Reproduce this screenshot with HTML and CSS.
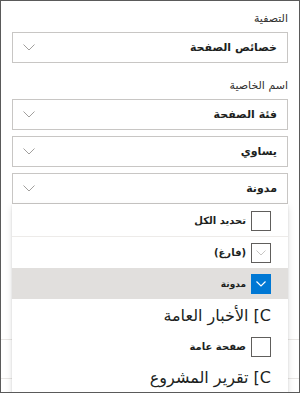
FILE: index.html
```html
<!DOCTYPE html>
<html lang="ar" dir="rtl">
<head>
<meta charset="utf-8">
<link rel="stylesheet" href="styles.css">
</head>
<body>
<div class="frame">
  <div class="content">
    <div class="field first">
      <div class="label">التصفية</div>
      <div class="select"><span class="val">خصائص الصفحة</span><svg class="chev" width="12" height="7" viewBox="0 0 12 7"><polyline points="0.5,0.5 6,6 11.5,0.5" fill="none" stroke="#a19f9d" stroke-width="1"/></svg></div>
    </div>
    <div class="field">
      <div class="label">اسم الخاصية</div>
      <div class="stack">
        <div class="select"><span class="val">فئة الصفحة</span><svg class="chev" width="12" height="7" viewBox="0 0 12 7"><polyline points="0.5,0.5 6,6 11.5,0.5" fill="none" stroke="#a19f9d" stroke-width="1"/></svg></div>
        <div class="select"><span class="val">يساوي</span><svg class="chev" width="12" height="7" viewBox="0 0 12 7"><polyline points="0.5,0.5 6,6 11.5,0.5" fill="none" stroke="#a19f9d" stroke-width="1"/></svg></div>
        <div class="dropdown">
          <div class="select"><span class="val">مدونة</span><svg class="chev" width="12" height="7" viewBox="0 0 12 7"><polyline points="0.5,0.5 6,6 11.5,0.5" fill="none" stroke="#a19f9d" stroke-width="1"/></svg></div>
          <div class="panel">
            <div class="opt sep">
              <span class="box"></span><span class="otext">تحديد الكل</span>
            </div>
            <div class="opt">
              <span class="box dim"><svg width="10" height="6" viewBox="0 0 10 6"><polyline points="0.5,0.5 5,5 9.5,0.5" fill="none" stroke="#c8c6c4" stroke-width="1"/></svg></span><span class="otext">(فارغ)</span>
            </div>
            <div class="opt sel">
              <span class="box on"><svg width="10" height="6" viewBox="0 0 10 6"><polyline points="0.5,0.5 5,5 9.5,0.5" fill="none" stroke="#ffffff" stroke-width="1.2"/></svg></span><span class="otext small">مدونة</span>
            </div>
            <div class="opt big">C] الأخبار العامة</div>
            <div class="opt mid">
              <span class="box"></span><span class="otext">صفحة عامة</span>
            </div>
            <div class="opt big">C] تقرير المشروع</div>
          </div>
        </div>
      </div>
    </div>
    <div class="under">
      <div class="urow"></div>
      <div class="urow check"><svg width="9" height="7" viewBox="0 0 9 7"><polyline points="0.5,3.5 3,6 8.5,0.5" fill="none" stroke="#b3b0ad" stroke-width="1"/></svg></div>
    </div>
  </div>
</div>
</body>
</html>
```

FILE: styles.css
```css
* { box-sizing: border-box; }
html, body { margin: 0; padding: 0; background: #ffffff; }
body {
  font-family: "DejaVu Sans", "Noto Sans", sans-serif;
  color: #201f1e;
}
.frame {
  width: 300px;
  height: 393px;
  border: 1px solid #5a5a5a;
  overflow: hidden;
  direction: rtl;
  background: #fff;
}
.content {
  padding: 8px 11px 0 11px;
}
.field.first { margin-bottom: 13px; }
.label {
  height: 20px;
  line-height: 20px;
  font-size: 11px;
  color: #323130;
  margin-bottom: 3px;
}
.stack {
  display: flex;
  flex-direction: column;
  gap: 6px;
}
.select {
  height: 31px;
  border: 1px solid #c8c6c4;
  display: flex;
  align-items: center;
  justify-content: space-between;
  padding: 0 10px 0 10px;
  background: #fff;
}
.val {
  font-size: 11px;
  font-weight: bold;
  color: #201f1e;
}
.chev { display: block; }
.dropdown { position: relative; }
.panel {
  position: absolute;
  top: 100%;
  left: 0;
  right: 0;
  background: #fff;
  box-shadow: 0 3px 7px rgba(0,0,0,0.13), 0 0.6px 1.8px rgba(0,0,0,0.11);
  z-index: 2;
  padding-bottom: 20px;
}
.opt {
  display: flex;
  align-items: center;
  gap: 5px;
  padding: 0 17px 0 10px;
  height: 31px;
}
.opt.sep {
  height: 33px;
  border-bottom: 1px solid #edebe9;
  padding-top: 1px;
}
.opt.sel { background: #e1dfdd; }
.opt.big {
  height: 33px;
  font-size: 16px;
  color: #201f1e;
}
.opt.mid { height: 29px; }
.box {
  width: 20px;
  height: 20px;
  border: 1px solid #605e5c;
  background: #fff;
  display: flex;
  align-items: center;
  justify-content: center;
  flex: none;
}
.box.dim { border-color: #605e5c; }
.box.on { background: #0078d4; border-color: #0078d4; }
.box svg { display: block; }
.otext {
  font-size: 10px;
  font-weight: bold;
  color: #201f1e;
}
.otext.small { font-size: 9px; }
.under {
  margin: 135px -11px 0 -11px;
}
.urow {
  height: 39px;
  border-top: 1px solid #e8e6e4;
  display: flex;
  align-items: center;
  padding-right: 3px;
}
.urow.check { border-bottom: 1px solid #e8e6e4; }
.urow svg { display: block; }
```
